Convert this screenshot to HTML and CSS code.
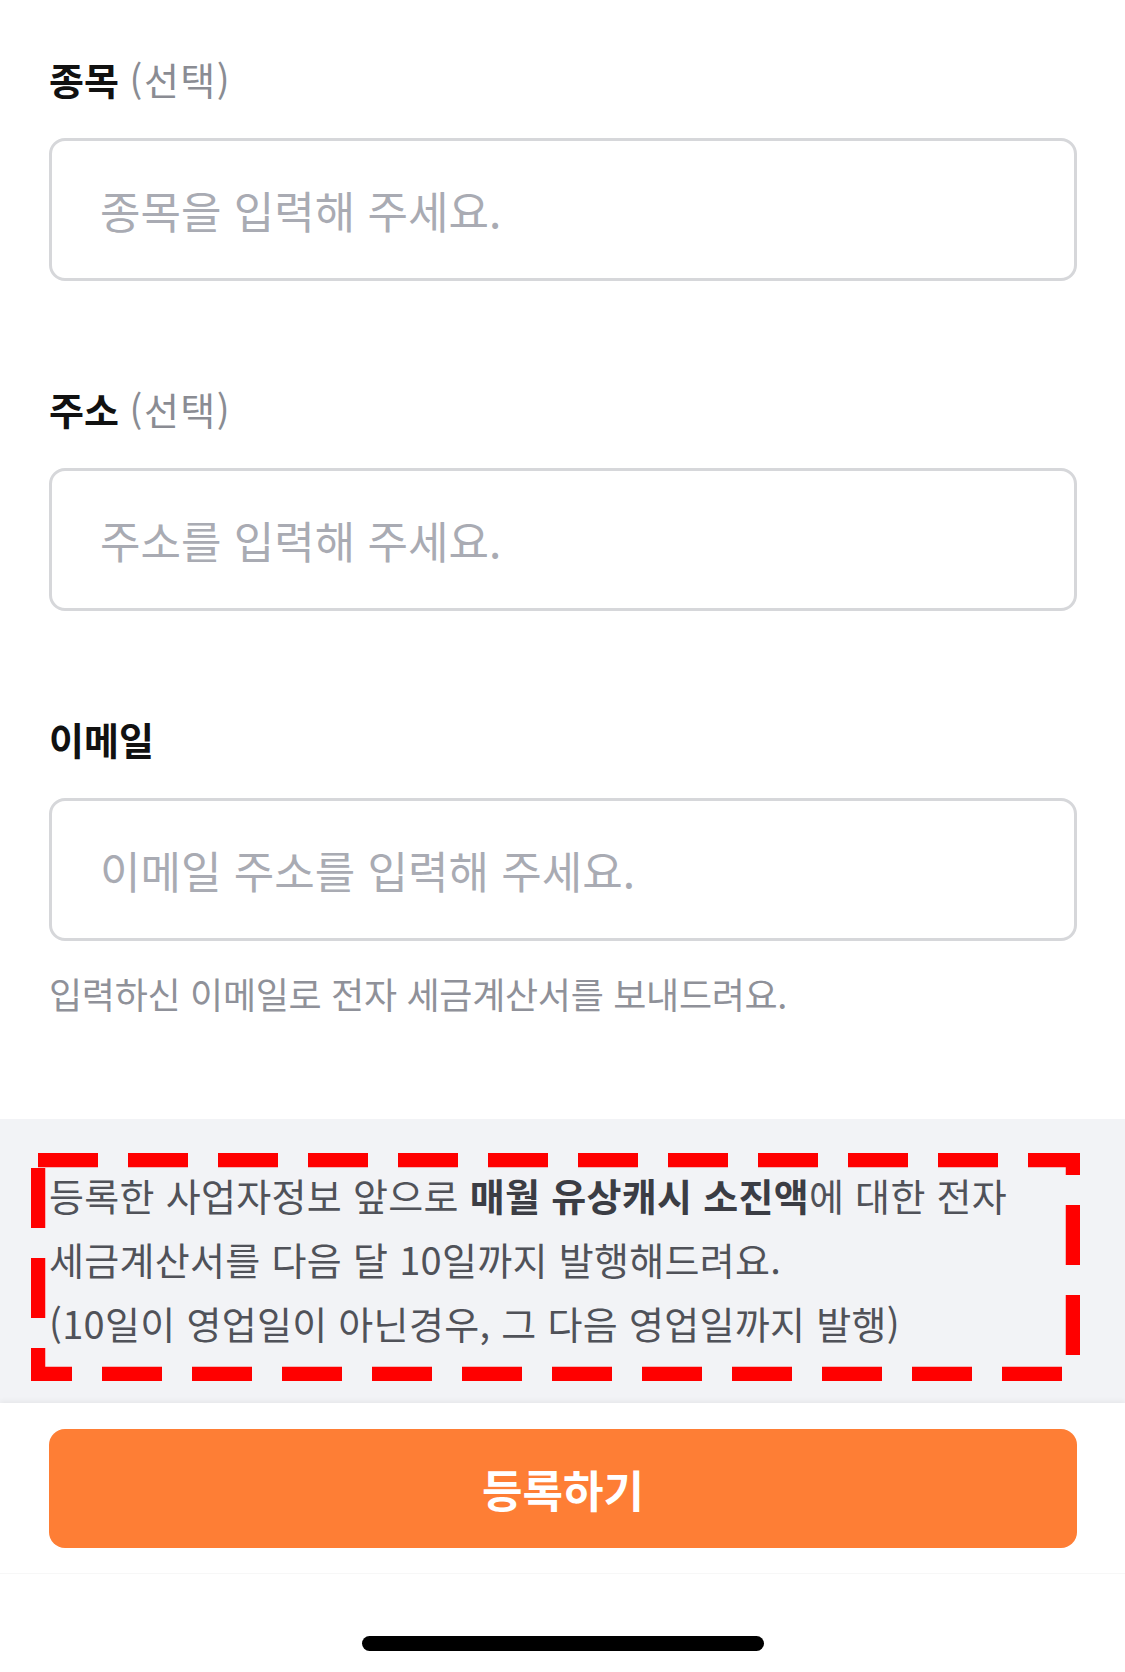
FILE: index.html
```html
<!DOCTYPE html>
<html lang="ko">
<head>
  <meta charset="UTF-8">
  <title>사업자정보 등록</title>
  <link rel="stylesheet" href="styles.css">
</head>
<body>
  <div class="form">
    <div class="field">
      <label class="label" for="item">종목 <span class="optional">(선택)</span></label>
      <input class="input" type="text" id="item" placeholder="종목을 입력해 주세요.">
    </div>

    <div class="field">
      <label class="label" for="address">주소 <span class="optional">(선택)</span></label>
      <input class="input" type="text" id="address" placeholder="주소를 입력해 주세요.">
    </div>

    <div class="field">
      <label class="label" for="email">이메일</label>
      <input class="input" type="text" id="email" placeholder="이메일 주소를 입력해 주세요.">
      <p class="help">입력하신 이메일로 전자 세금계산서를 보내드려요.</p>
    </div>
  </div>

  <div class="notice">
    <p class="notice-text">
      등록한 사업자정보 앞으로 <b>매월 유상캐시 소진액</b>에 대한 전자<br>
      세금계산서를 다음 달 10일까지 발행해드려요.<br>
      (10일이 영업일이 아닌경우, 그 다음 영업일까지 발행)
    </p>
    <!-- 빨간 점선 표시 -->
    <svg class="mark" width="1049" height="228" viewBox="0 0 1049 228">
      <rect x="7" y="7" width="1035" height="214" fill="none" stroke="#ff0000" stroke-width="14.5" stroke-dasharray="60 30"/>
    </svg>
  </div>

  <div class="bottom">
    <div class="bottom-inner">
      <button class="submit">등록하기</button>
    </div>
    <div class="home-bar"></div>
  </div>
</body>
</html>
```

FILE: styles.css
```css
body {
  margin: 0;
  background: #fff;
  font-family: "Noto Sans CJK KR", "Noto Sans", sans-serif;
  color: #111;
  width: 1125px;
}

.form {
  padding: 53px 48px 0 49px;
}

.field {
  margin-bottom: 102px;
}

.field:last-child {
  margin-bottom: 0;
}

.label {
  display: block;
  font-size: 38px;
  line-height: 52px;
  font-weight: 700;
  margin-bottom: 33px;
  color: #111;
}

.optional {
  font-weight: 400;
  letter-spacing: 1.5px;
  color: #8a8c93;
}

.input {
  display: block;
  width: 100%;
  height: 143px;
  box-sizing: border-box;
  border: 3px solid #d6d7da;
  border-radius: 16px;
  padding: 0 48px;
  font-family: inherit;
  font-size: 44px;
  color: #111;
  background: #fff;
  outline: none;
}

.input::placeholder {
  color: #a9abb3;
}

.help {
  margin: 28px 0 0;
  font-size: 36px;
  line-height: 48px;
  letter-spacing: -0.3px;
  color: #8f9199;
}

.notice {
  position: relative;
  margin-top: 102px;
  background: #f2f3f6;
  padding: 44px 48px 48px 49px;
}

.notice-text {
  margin: 0;
  font-size: 38px;
  line-height: 64px;
  letter-spacing: 0.3px;
  color: #505259;
  white-space: nowrap;
}

.notice-text b {
  color: #3b3d44;
}

.mark {
  position: absolute;
  left: 31px;
  top: 34px;
}

.bottom {
  position: relative;
  background: #fff;
  box-shadow: 0 -2px 5px rgba(0, 0, 0, 0.05);
  height: 270px;
}

.bottom-inner {
  padding: 26px 48px 25px 49px;
  border-bottom: 1px solid #f7f7f7;
}

.submit {
  display: block;
  width: 100%;
  height: 119px;
  border: none;
  border-radius: 16px;
  background: #fe7e35;
  color: #fff;
  font-family: inherit;
  font-size: 44px;
  font-weight: 700;
  cursor: pointer;
}

.home-bar {
  width: 402px;
  height: 15px;
  margin: 62px auto 0;
  border-radius: 8px;
  background: #000;
}
```
